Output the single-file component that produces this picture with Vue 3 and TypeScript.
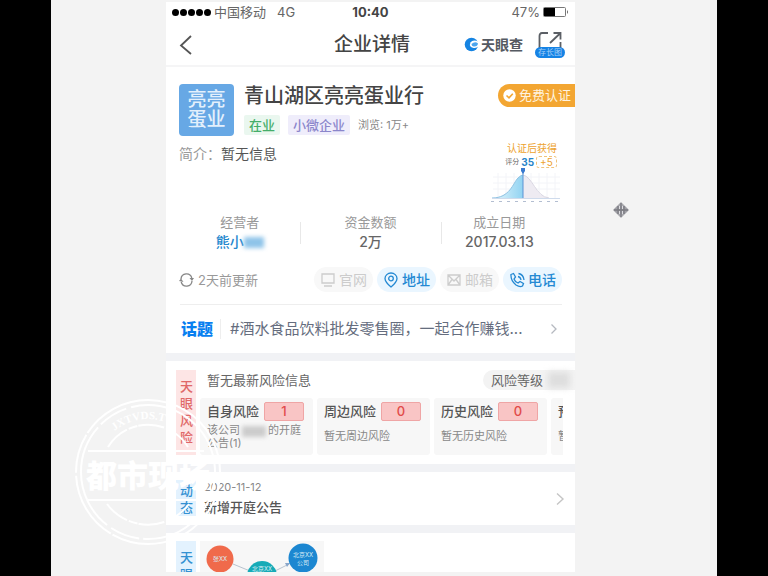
<script setup lang="ts">
interface Fact { label: string; value: string; link?: boolean }
interface Contact { name: string; icon: 'site' | 'pin' | 'mail' | 'phone'; active: boolean }
interface Risk { title: string; count: number; note: string }

const facts: Fact[] = [
  { label: '经营者', value: '熊小', link: true },
  { label: '资金数额', value: '2万' },
  { label: '成立日期', value: '2017.03.13' },
]
const contacts: Contact[] = [
  { name: '官网', icon: 'site', active: false },
  { name: '地址', icon: 'pin', active: true },
  { name: '邮箱', icon: 'mail', active: false },
  { name: '电话', icon: 'phone', active: true },
]
const risks: Risk[] = [
  { title: '周边风险', count: 0, note: '暂无周边风险' },
  { title: '历史风险', count: 0, note: '暂无历史风险' },
]
const ticks: number[] = [0, 1, 2, 3, 4, 5, 6, 7, 8]
</script>

<template>
  <div class="stage">
    <main class="phone">
      <div class="status">
        <div class="carrier">
          <span class="signal"><i v-for="n in 5" :key="n"></i></span>
          <span>中国移动</span>
          <span class="net">4G</span>
        </div>
        <strong class="clock">10:40</strong>
        <div class="power">
          <span>47%</span>
          <svg width="26" height="12" viewBox="0 0 26 12">
            <rect x="0.5" y="1.5" width="22" height="9" rx="1" fill="#fff" stroke="#777" />
            <rect x="1" y="2" width="11" height="8" fill="#000" />
            <path d="M24 4v4q2-2 0-4z" fill="#666" />
          </svg>
        </div>
      </div>

      <header class="nav">
        <button class="back" type="button" aria-label="返回">
          <svg width="14" height="20" viewBox="0 0 14 20"><path d="M12 1L2 10.500L12 19" fill="none" stroke="#555" stroke-width="1.8" /></svg>
        </button>
        <h1>企业详情</h1>
        <div class="tools">
          <span class="brand">
            <svg width="15" height="15" viewBox="0 0 15 15">
              <circle cx="7.500" cy="7.500" r="6.800" fill="#1684e2" />
              <path d="M15 5Q9 2 6.500 5.500Q4.500 10 9.500 11Q12.500 11.500 15 9Z" fill="#fff" />
              <path d="M7.500 7Q11 4 14 6.500Q13.500 10 9.500 9.500Q7.500 9 7.500 7Z" fill="#4ca5ee" />
            </svg>
            <b>天眼查</b>
          </span>
          <button class="share" type="button">
            <svg width="26" height="20" viewBox="0 0 26 20">
              <path d="M11 2H5Q2.500 2 2.500 5V19M23.500 11V19M13 12L23 2.500M16.500 2H23.500V8.500" fill="none" stroke="#5b5f65" stroke-width="1.800" />
            </svg>
            <span>存长图</span>
          </button>
        </div>
      </header>

      <section class="company">
        <div class="head">
          <div class="logo">亮亮<br>蛋业</div>
          <div class="title">
            <h2>青山湖区亮亮蛋业行</h2>
            <div class="tags">
              <span class="tag open">在业</span>
              <span class="tag small">小微企业</span>
              <span class="views">浏览: 1万+</span>
            </div>
          </div>
          <button class="verify" type="button">
            <svg width="13" height="13" viewBox="0 0 13 13"><circle cx="6.500" cy="6.500" r="6.200" fill="#fff" /><path d="M3.500 6.500L6 8.800L9.800 4.700" fill="none" stroke="#f3a632" stroke-width="1.600" /></svg>
            免费认证
          </button>
        </div>

        <div class="about">
          <p><span>简介：</span>暂无信息</p>
          <figure class="score">
            <figcaption>认证后获得</figcaption>
            <div class="points"><span>评分</span><b>35</b><em>+5</em></div>
            <svg width="72" height="36" viewBox="0 0 72 36">
              <defs>
                <linearGradient id="fill" x1="0" x2="1"><stop offset="0" stop-color="#e7f7fc" /><stop offset="1" stop-color="#91d3f2" /></linearGradient>
              </defs>
              <path d="M3 9H70M3 15H70M3 21H70M8 5V30M16 5V30M24 5V30M41 5V30M49 5V30M57 5V30M65 5V30" stroke="#f3f4f8" />
              <path d="M33 7C42 8 45 29 59 30H33Z" fill="#eeebf2" />
              <path d="M2 30C20 30 23 15 28 10Q31 7 33 7V30Z" fill="url(#fill)" />
              <path d="M2 30C20 30 23 15 28 10Q31 7 33 7" fill="none" stroke="#8fc2e3" />
              <path d="M33 7C42 8 46 29 59 30" fill="none" stroke="#d9d6e2" />
              <path d="M2 30.500H70" stroke="#cfdbec" />
              <path d="M33 4V30" stroke="#5a93d4" />
              <path d="M31 0H35V3L33 6L31 3Z" fill="#3979cf" />
              <rect v-for="t in ticks" :key="t" :x="1 + t * 8" y="33" width="3" height="1" fill="#b3bed1" />
            </svg>
          </figure>
        </div>

        <dl class="facts">
          <div v-for="f in facts" :key="f.label">
            <dt>{{ f.label }}</dt>
            <dd><a v-if="f.link" href="#owner">{{ f.value }}<i class="mask"></i></a><template v-else>{{ f.value }}</template></dd>
          </div>
        </dl>

        <div class="contact">
          <span class="updated">
            <svg width="15" height="14" viewBox="0 0 15 14"><path d="M2 6A5.500 5.500 0 0 1 12.800 5M13 8A5.500 5.500 0 0 1 2.200 9" fill="none" stroke="#888" stroke-width="1.300" /><path d="M10.500 5H15L13 8ZM0 8L2 5.500L4.500 9Z" fill="#888" /></svg>
            2天前更新
          </span>
          <div class="pills">
            <button v-for="c in contacts" :key="c.name" type="button" :class="{ active: c.active }">
              <svg width="16" height="16" viewBox="0 0 16 16" fill="none" stroke="currentColor" stroke-width="1.300">
                <path v-if="c.icon === 'site'" d="M2 2H14V11H2ZM4 14H12" />
                <template v-else-if="c.icon === 'pin'"><path d="M8 15Q2 10 2 6.500A6 5.500 0 0 1 14 6.500Q14 10 8 15Z" /><circle cx="8" cy="6.500" r="2.300" /></template>
                <path v-else-if="c.icon === 'mail'" d="M2 3H14V13H2ZM2 3L8 9L14 3M2 13L6 7.500M14 13L10 7.500" />
                <path v-else d="M2 2.500L4.500 1.500L6.500 5L5 7Q6 10 9 11L11 9.500L14.500 11.500L13.500 14Q11 15.500 7 13Q1.500 8.500 2 2.500ZM9 4.500Q11.500 5 12 8M9.500 1.500Q14.500 2.500 15 8" />
              </svg>
              {{ c.name }}
            </button>
          </div>
        </div>

        <a class="topic" href="#topic">
          <b>话题</b>
          <span>#酒水食品饮料批发零售圈，一起合作赚钱...</span>
          <svg width="8" height="12" viewBox="0 0 8 12"><path d="M1.500 1.500L6 6L1.500 10.500" fill="none" stroke="#b5b9c0" stroke-width="1.300" /></svg>
        </a>
      </section>

      <section class="panel risk">
        <h3 class="side red">天眼风险</h3>
        <div class="content">
          <div class="summary">
            <span>暂无最新风险信息</span>
            <span class="level">风险等级<i></i></span>
          </div>
          <div class="cards">
            <article>
              <h4>自身风险<b>1</b></h4>
              <p>该公司<i class="redact"></i>的开庭公告(1)</p>
            </article>
            <article v-for="r in risks" :key="r.title">
              <h4>{{ r.title }}<b>{{ r.count }}</b></h4>
              <p class="single">{{ r.note }}</p>
            </article>
            <article>
              <h4>预</h4>
              <p class="single">暂</p>
            </article>
          </div>
        </div>
      </section>

      <section class="panel news">
        <h3 class="side blue">动态</h3>
        <a href="#news">
          <span><time>2020-11-12</time><b>新增开庭公告</b></span>
          <svg width="10" height="14" viewBox="0 0 10 14"><path d="M2 1.500L8 7L2 12.500" fill="none" stroke="#c5c5c5" stroke-width="1.400" /></svg>
        </a>
      </section>

      <section class="panel graph">
        <h3 class="side blue">天眼</h3>
        <svg width="124" height="31" viewBox="0 0 124 31" text-anchor="middle" fill="#d9ecf6">
          <rect width="124" height="31" fill="#f7f7f7" />
          <path d="M33 23L50 30M75 30L89 23" stroke="#b9c3cf" />
          <path d="M85 22L90 22L87 26Z" fill="#8aa7ca" />
          <circle cx="20" cy="18" r="13.500" fill="#f06a4b" />
          <circle cx="62" cy="35" r="15" fill="#16abb7" />
          <circle cx="103" cy="17" r="14.500" fill="#1c87d1" />
          <text x="20" y="20" font-size="6">张XX</text>
          <text x="62" y="30" font-size="6">北京XX</text>
          <text x="103" y="16" font-size="6">北京XX</text>
          <text x="103" y="24" font-size="6">公司</text>
        </svg>
      </section>
    </main>

    <svg class="watermark" width="150" height="152" viewBox="0 0 150 152" fill="none" stroke="#fff">
      <defs><path id="arc" d="M32 45A53 53 0 0 1 118 45" /></defs>
      <circle cx="75" cy="76" r="72" stroke-width="2" stroke-dasharray="150 2 70 3 40 2" />
      <circle cx="75" cy="76" r="67" stroke-width="2" stroke-dasharray="110 4 30 5" />
      <path d="M35 51A47 47 0 0 1 115 51M34 108A51 51 0 0 0 116 108" stroke-width="2" stroke-dasharray="26 2 9 1" />
      <path d="M15 55H131M15 104H131" stroke-width="2" />
      <text font-size="11" class="ring" fill="#fff" stroke="none"><textPath href="#arc" startOffset="14">JXTVDS.TC</textPath></text>
      <text x="75" y="91" class="mark" font-size="31" text-anchor="middle" fill="#fff" stroke="none">都市现场</text>
    </svg>

    <svg class="cursor" width="16" height="16" viewBox="0 0 16 16">
      <path d="M8 0L12 4V12L8 16L4 12V4Z" fill="#a9a9ae" />
      <path d="M0 8L4 4H12L16 8L12 12H4Z" fill="#a0a0a6" />
      <path d="M8 1V15M1 8H15M5 4V12M11 4V12" stroke="#7b7b82" stroke-width="1.300" />
      <path d="M6.500 4V7M9.500 4V7M6.500 9V12M9.500 9V12" stroke="#dcdce0" />
    </svg>
  </div>
</template>

<style>
body { margin: 0; background: #000; }
</style>

<style scoped>
* { box-sizing: border-box; }
h1, h2, h3, h4, p, dl, dd, figure { margin: 0; }
button { border: 0; padding: 0; background: none; font: inherit; color: inherit; }
a { color: inherit; text-decoration: none; }
svg { flex: none; display: block; }
.stage {
  position: relative;
  display: grid;
  grid-template-columns: 51fr 115fr minmax(0, 409fr) 142fr 51fr;
  min-height: 100vh;
  padding: 2px 0 4px;
  background: linear-gradient(90deg, #000 6.65%, #f3f3f3 6.65%, #f3f3f3 93.35%, #000 93.35%);
  font-family: Inter, "Noto Sans CJK SC", sans-serif;
  font-size: 13px;
  line-height: 20px;
  color: #666;
}
.phone { grid-column: 3; align-self: start; background: #f1f2f5; }

.status {
  display: grid;
  grid-template-columns: 1fr auto 1fr;
  align-items: center;
  padding: 0 6px;
  background: #fff;
}
.carrier, .power, .signal { display: flex; align-items: center; }
.carrier { gap: 3px; }
.signal { gap: 1px; }
.signal i { width: 7px; height: 7px; border-radius: 50%; background: #000; }
.net { padding-left: 8px; }
.clock { font-weight: 700; color: #444; }
.power { justify-content: flex-end; gap: 3px; }

.nav {
  display: grid;
  grid-template-columns: 1fr auto 1fr;
  align-items: center;
  height: 45px;
  padding: 2px 10px 0 13px;
  background: #fff;
  border-bottom: 2px solid #f5f5f6;
}
.nav h1 { font-size: 19px; line-height: 28px; font-weight: 500; color: #444; }
.tools { display: flex; justify-content: flex-end; align-items: center; gap: 12px; }
.brand { display: flex; align-items: center; gap: 2px; }
.brand b { font-size: 14px; color: #555a62; }
.share { display: flex; flex-direction: column; align-items: center; }
.share svg { margin-bottom: -4px; }
.share span {
  padding: 0 3px;
  border-radius: 6px;
  background: #1683e5;
  color: #a4d0f8;
  font-size: 8px;
  line-height: 11px;
}

.company { background: #fff; padding: 17px 0 0 13px; }
.head { display: flex; align-items: flex-start; }
.logo {
  width: 55px;
  height: 52px;
  padding-top: 6px;
  border-radius: 4px;
  background: #67a8e5;
  color: #e3f0fc;
  font-size: 19px;
  line-height: 20px;
  font-weight: 500;
  text-align: center;
}
.title { flex: 1; padding-left: 10px; }
.title h2 { font-size: 20px; line-height: 24px; font-weight: 500; color: #444; white-space: nowrap; }
.tags { display: flex; align-items: center; gap: 8px; padding-top: 7px; }
.tag { padding: 0 5px; font-weight: 500; border-radius: 2px; }
.open { background: #eaf7ef; color: #45ad69; }
.small { background: #efedfb; color: #8b86cb; }
.views { font-size: 11px; color: #888; }
.verify {
  display: flex;
  align-items: center;
  gap: 3px;
  padding: 0 4px 0 5px;
  border-radius: 12px 0 0 12px;
  background: #f3a632;
  color: #fff3df;
  line-height: 23px;
  white-space: nowrap;
}

.about { display: flex; justify-content: space-between; padding: 4px 13px 0 0; }
.about p { padding-top: 4px; font-size: 14px; color: #555; }
.about p span { color: #999; }
.score { display: flex; flex-direction: column; align-items: center; width: 72px; }
.score figcaption { padding-left: 12px; font-size: 10px; line-height: 16px; color: #eda22e; }
.points { display: flex; align-items: center; gap: 2px; padding-left: 10px; font-size: 7px; line-height: 12px; }
.points b { font-size: 10px; color: #2784ca; }
.points em {
  padding: 0 3px;
  border: 1px dashed #f0c37c;
  border-radius: 3px;
  font-size: 10px;
  line-height: 10px;
  font-style: normal;
  color: #eda22e;
}

.facts { display: grid; grid-template-columns: 121fr 140fr 117fr; padding: 8px 17px 0 0; text-align: center; }
.facts div { position: relative; }
.facts div + div::before {
  content: "";
  position: absolute;
  left: 0;
  top: 10px;
  width: 1px;
  height: 22px;
  background: #e8e8e8;
}
.facts dt { color: #999; }
.facts dd { font-size: 14px; font-weight: 500; }
.facts a { display: inline-flex; align-items: center; color: #2587cd; }
.mask { width: 20px; height: 11px; background: #8fc4e9; filter: blur(2px); }

.contact { display: flex; align-items: center; justify-content: space-between; padding: 15px 13px 0 0; }
.updated { display: flex; align-items: center; gap: 4px; color: #999; }
.pills { display: flex; gap: 4px; }
.pills button {
  display: flex;
  align-items: center;
  justify-content: center;
  gap: 3px;
  padding: 0 6px;
  border-radius: 13px;
  background: #f8f8f8;
  color: #ccc;
  font-size: 14px;
  line-height: 25px;
}
.pills .active { background: #eaf6ff; color: #2489d3; font-weight: 500; }

.topic {
  display: flex;
  align-items: center;
  margin: 12px 13px 0 1px;
  padding: 0 4px 0 1px;
  height: 49px;
  border-top: 1px solid #eee;
  font-size: 15px;
  color: #656d7e;
}
.topic b { padding-right: 7px; border-right: 1px solid #eee; font-size: 16px; font-weight: 900; color: #087ff0; }
.topic span { flex: 1; padding-left: 9px; white-space: nowrap; }

.panel { display: flex; gap: 4px; margin-top: 8px; background: #fff; }
.side {
  flex: none;
  width: 20px;
  padding: 8px 3px 0 4px;
  font-size: 13px;
  line-height: 17px;
  font-weight: 500;
}
.red { background: #fde5e5; color: #e06868; }
.blue { background: #e3f2fe; color: #3491d2; }

.risk { padding: 9px 0 9px 10px; }
.content { flex: 1; min-width: 0; }
.summary { display: flex; justify-content: space-between; align-items: center; padding-left: 7px; }
.level { display: flex; align-items: center; gap: 5px; padding: 0 5px 0 8px; border-radius: 10px 0 0 10px; background: #f3f3f3; }
.level i { width: 22px; height: 16px; background: #dedede; filter: blur(3px); }
.cards { display: grid; grid-template-columns: repeat(4, 113px); gap: 4px; margin: 8px 12px 0 0; overflow: hidden; }
.cards article { height: 57px; padding: 4px 9px 0 7px; border-radius: 3px; background: #f7f7f7; }
.cards h4 { display: flex; justify-content: space-between; font-size: 13px; line-height: 19px; font-weight: 500; color: #555; white-space: nowrap; }
.cards b {
  width: 40px;
  border: 1px solid #efa5a5;
  border-radius: 2px;
  background: #f9c5c5;
  color: #e14a4a;
  font-weight: 500;
  line-height: 17px;
  text-align: center;
}
.cards p { padding-top: 3px; font-size: 11px; line-height: 13px; color: #888; }
.cards .single { padding-top: 9px; white-space: nowrap; }
.redact { display: inline-block; width: 24px; height: 11px; margin: 0 2px; background: #ccc; filter: blur(2px); vertical-align: middle; }

.news { padding: 8px 10px; }
.news .side { height: 36px; padding-top: 2px; }
.news a { flex: 1; display: flex; align-items: center; justify-content: space-between; padding-left: 4px; }
.news span { display: flex; flex-direction: column; }
.news time { font-size: 11px; line-height: 15px; color: #888; }
.news b { padding-top: 2px; font-weight: 500; line-height: 20px; color: #555; }

.graph { padding: 8px 0 0 10px; }
.graph .side { height: 31px; overflow: hidden; }

.watermark { position: absolute; left: 73px; top: 396px; }
.ring { font-family: "Liberation Serif", serif; font-weight: 700; }
.mark { font-family: "Noto Sans CJK SC", sans-serif; font-weight: 900; }
.cursor { position: absolute; left: 613px; top: 202px; }
</style>
